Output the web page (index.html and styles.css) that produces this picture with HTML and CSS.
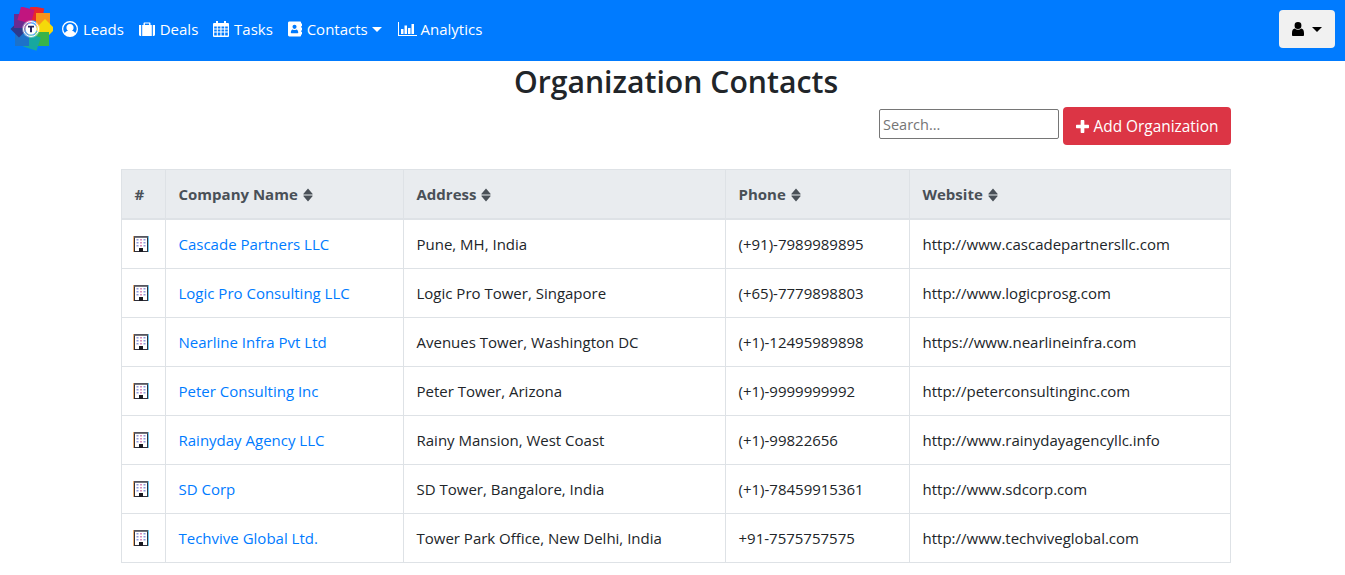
FILE: index.html
```html
<!DOCTYPE html>
<html lang="en">
<head>
<meta charset="utf-8">
<title>Organization Contacts</title>
<link rel="stylesheet" href="styles.css">
</head>
<body>
<svg class="defs" width="0" height="0" aria-hidden="true">
  <symbol id="i-building" viewBox="0 0 16 16">
    <rect x="0" y="0" width="1" height="16" fill="#f0b070"/>
    <rect x="15" y="0" width="1" height="16" fill="#70c8f0"/>
    <rect x="1.500" y="0.500" width="13" height="15" fill="#fff" stroke="#2f2f3a"/>
    <rect x="1" y="0" width="14" height="1.800" fill="#55555f"/>
    <g fill="#8f9ade">
      <rect x="3.500" y="3" width="2" height="1.500"/><rect x="10.500" y="3" width="2" height="1.500"/>
      <rect x="3.500" y="6" width="2" height="1.500"/><rect x="10.500" y="6" width="2" height="1.500"/>
      <rect x="3.500" y="9" width="2" height="1.500"/><rect x="10.500" y="9" width="2" height="1.500"/>
    </g>
    <g fill="#dc8fbc">
      <rect x="7" y="3" width="2" height="1.500"/><rect x="7" y="6" width="2" height="1.500"/><rect x="7" y="9" width="2" height="1.500"/>
    </g>
    <rect x="6" y="12" width="4" height="4" fill="#1a1a22"/>
  </symbol>
  <symbol id="i-sort" viewBox="0 0 10 14">
    <path d="M5 0.500 9.500 5.800a.4.4 0 0 1-.3.7H.8a.4.4 0 0 1-.3-.7zM.8 7.500h8.400a.4.4 0 0 1 .3.7L5 13.500.5 8.200a.4.4 0 0 1 .3-.7z" fill="currentColor"/>
  </symbol>
</svg>
<nav class="navbar">
  <svg class="logo" viewBox="0 0 44 44" aria-label="Logo">
    <g transform="translate(22 22)">
      <rect x="-2" y="-22" width="14" height="14" fill="#e8262c" transform="rotate(12 5 -15)"/>
      <rect x="5" y="-16" width="14" height="14" fill="#f7941d"/>
      <rect x="7" y="-7" width="14" height="14" fill="#f5d90a" transform="rotate(45 14 0)"/>
      <rect x="4" y="3" width="14" height="14" fill="#37b34a"/>
      <rect x="-6" y="6" width="14" height="14" fill="#17a8a0" transform="rotate(18 1 13)"/>
      <rect x="-16" y="3" width="14" height="14" fill="#1d72c9"/>
      <rect x="-18" y="-6" width="12" height="12" fill="#2d3a8c" transform="rotate(45 -12 0)"/>
      <rect x="-17" y="-15" width="14" height="14" fill="#6a2c91"/>
      <rect x="-12" y="-21" width="14" height="14" fill="#c1157f" transform="rotate(15 -5 -14)"/>
      <circle r="9" fill="#fff" fill-opacity=".35"/>
      <circle r="7.500" fill="none" stroke="#fff" stroke-width="1"/>
      <circle r="5.500" fill="#fff"/>
      <path d="M-3-3.200H3V-1.600H1V3.200H-1V-1.600H-3z" fill="#25255e"/>
    </g>
  </svg>
  <ul class="nav-list">
    <li><a class="nav-link" href="#">
      <svg class="nav-icon" viewBox="0 0 16 16"><path fill="currentColor" fill-rule="evenodd" d="M8 0a8 8 0 1 1 0 16A8 8 0 0 1 8 0zm0 1.400a6.600 6.600 0 0 0-5.200 10.700C3.500 10.700 4.600 10 6 9.700a3.600 3.600 0 1 1 4 0c1.400.3 2.500 1 3.200 2.400A6.600 6.600 0 0 0 8 1.400z"/></svg>Leads</a></li>
    <li><a class="nav-link" href="#">
      <svg class="nav-icon" viewBox="0 0 16 16"><path fill="currentColor" d="M5.500 1.500h5c.6 0 1 .4 1 1V4H16v9.500c0 .8-.6 1.500-1.500 1.500h-.7V4h-1v11H3.200V4h-1v11h-.7C.6 15 0 14.300 0 13.500V4h4.500V2.500c0-.6.4-1 1-1zm.4 1V4h4.200V2.500z"/></svg>Deals</a></li>
    <li><a class="nav-link" href="#">
      <svg class="nav-icon" viewBox="0 0 16 16"><path fill="currentColor" fill-rule="evenodd" d="M3 0h2v2h6V0h2v2h2a1 1 0 0 1 1 1v12a1 1 0 0 1-1 1H1a1 1 0 0 1-1-1V3a1 1 0 0 1 1-1h2zM1.200 5.500v2h2.600v-2zm3.600 0v2h2.600v-2zm3.700 0v2h2.700v-2zm3.700 0v2h2.600v-2zM1.200 8.500v2h2.600v-2zm3.600 0v2h2.600v-2zm3.700 0v2h2.700v-2zm3.700 0v2h2.600v-2zM1.200 11.500v3h2.600v-3zm3.600 0v3h2.600v-3zm3.700 0v3h2.700v-3zm3.700 0v3h2.600v-3z"/></svg>Tasks</a></li>
    <li><a class="nav-link" href="#">
      <svg class="nav-icon nav-icon-book" viewBox="0 0 15 16"><path fill="currentColor" fill-rule="evenodd" d="M1.500 0h11.500c.6 0 1 .4 1 1v1h1v3h-1v1.500h1v3h-1V11h1v3h-1v1c0 .6-.4 1-1 1H1.500C.7 16 0 15.300 0 14.500v-13C0 .7.700 0 1.500 0zM7 3.500a2.200 2.200 0 1 0 0 4.400 2.200 2.200 0 0 0 0-4.400zM3 11.800c0 .5.300.7.700.7h6.600c.4 0 .7-.2.700-.7 0-1.800-.9-3.300-2-3.300-.6.400-1.200.6-2 .6s-1.400-.2-2-.6c-1.100 0-2 1.500-2 3.300z"/></svg>Contacts<span class="caret"></span></a></li>
    <li><a class="nav-link" href="#">
      <svg class="nav-icon nav-icon-wide" viewBox="0 0 19 16"><path fill="currentColor" d="M0 1h1v13h18v1H0zM3 8h2.500v5H3zM6.500 4.500H9V13H6.500zM10 7h2.500v6H10zM13.500 3H16v10h-2.500z"/></svg>Analytics</a></li>
  </ul>
  <button class="user-btn" type="button" aria-label="User menu">
    <svg class="user-icon" viewBox="0 0 12 14"><path fill="currentColor" d="M6 0a3.400 3.400 0 0 1 3.400 3.500A3.400 3.400 0 0 1 6 7 3.400 3.400 0 0 1 2.600 3.500 3.400 3.400 0 0 1 6 0zM2.800 6.600C3.700 7.400 4.800 7.800 6 7.800s2.300-.4 3.200-1.200c1.800.1 2.800 1.900 2.800 4.700V13c0 .6-.5 1-1.100 1H1.100C.5 14 0 13.600 0 13v-1.700c0-2.800 1-4.600 2.800-4.700z"/></svg>
    <span class="caret caret-user"></span>
  </button>
</nav>
<main class="container">
  <h1 class="title">Organization Contacts</h1>
  <div class="toolbar">
    <input class="search" type="text" placeholder="Search...">
    <button class="add-btn" type="button">
      <svg class="plus" viewBox="0 0 12 12"><path fill="currentColor" d="M4.300.8C4.300.4 4.700 0 5.100 0h1.800c.4 0 .8.400.8.800v3.500h3.500c.4 0 .8.400.8.800v1.800c0 .4-.4.800-.8.800H7.700v3.500c0 .4-.4.800-.8.800H5.100c-.4 0-.8-.4-.8-.8V7.700H.8C.4 7.700 0 7.300 0 6.900V5.100c0-.4.400-.8.800-.8h3.500z"/></svg>Add Organization</button>
  </div>
  <table class="contacts">
    <thead>
      <tr>
        <th class="col-num">#</th>
        <th class="col-name">Company Name<svg class="sort"><use href="#i-sort"/></svg></th>
        <th class="col-addr">Address<svg class="sort"><use href="#i-sort"/></svg></th>
        <th class="col-phone">Phone<svg class="sort"><use href="#i-sort"/></svg></th>
        <th>Website<svg class="sort"><use href="#i-sort"/></svg></th>
      </tr>
    </thead>
    <tbody>
      <tr><td><svg class="bld"><use href="#i-building"/></svg></td><td><a href="#">Cascade Partners LLC</a></td><td>Pune, MH, India</td><td>(+91)-7989989895</td><td>http://www.cascadepartnersllc.com</td></tr>
      <tr><td><svg class="bld"><use href="#i-building"/></svg></td><td><a href="#">Logic Pro Consulting LLC</a></td><td>Logic Pro Tower, Singapore</td><td>(+65)-7779898803</td><td>http://www.logicprosg.com</td></tr>
      <tr><td><svg class="bld"><use href="#i-building"/></svg></td><td><a href="#">Nearline Infra Pvt Ltd</a></td><td>Avenues Tower, Washington DC</td><td>(+1)-12495989898</td><td>https://www.nearlineinfra.com</td></tr>
      <tr><td><svg class="bld"><use href="#i-building"/></svg></td><td><a href="#">Peter Consulting Inc</a></td><td>Peter Tower, Arizona</td><td>(+1)-9999999992</td><td>http://peterconsultinginc.com</td></tr>
      <tr><td><svg class="bld"><use href="#i-building"/></svg></td><td><a href="#">Rainyday Agency LLC</a></td><td>Rainy Mansion, West Coast</td><td>(+1)-99822656</td><td>http://www.rainydayagencyllc.info</td></tr>
      <tr><td><svg class="bld"><use href="#i-building"/></svg></td><td><a href="#">SD Corp</a></td><td>SD Tower, Bangalore, India</td><td>(+1)-78459915361</td><td>http://www.sdcorp.com</td></tr>
      <tr><td><svg class="bld"><use href="#i-building"/></svg></td><td><a href="#">Techvive Global Ltd.</a></td><td>Tower Park Office, New Delhi, India</td><td>+91-7575757575</td><td>http://www.techviveglobal.com</td></tr>
    </tbody>
  </table>
</main>
</body>
</html>
```
FILE: styles.css
```css
* { box-sizing: border-box; }
html, body { margin: 0; height: 575px; overflow: hidden; }
body {
  font-family: "Open Sans", "Noto Sans", sans-serif;
  font-size: 15px;
  color: #212529;
  background: #fff;
}
.defs { position: absolute; }
.navbar {
  height: 61px;
  background: #007bff;
  display: flex;
  align-items: center;
  padding: 0 10px 3px 9px;
}
.logo { width: 44px; height: 44px; flex: none; }
.nav-list {
  display: flex;
  list-style: none;
  margin: 0;
  padding: 0 0 0 9px;
  flex: 1;
}
.nav-link {
  display: flex;
  align-items: center;
  color: #fff;
  text-decoration: none;
  margin-right: 14.800px;
}
.nav-icon { width: 16px; height: 16px; margin-right: 5px; }
.nav-icon-book { width: 14px; }
.nav-icon-wide { width: 19px; margin-right: 4px; }
.caret {
  display: inline-block;
  margin: 0 1px 0 4px;
  border-top: 5px solid;
  border-left: 5px solid transparent;
  border-right: 5px solid transparent;
}
.user-btn {
  width: 56px;
  height: 38px;
  background: #f1f1f1;
  border: 0;
  border-radius: 4px;
  color: #000;
  display: flex;
  align-items: center;
  justify-content: center;
  padding: 0;
}
.user-icon { width: 12px; height: 14px; }
.caret-user { margin: 0 0 0 8px; }
.container { width: 1110px; margin: 0 0 0 121px; }
.title {
  margin: 0;
  height: 46px;
  text-align: center;
  font-size: 30.200px;
  line-height: 42px;
  font-weight: 600;
}
.toolbar {
  display: flex;
  justify-content: flex-end;
  align-items: flex-start;
  gap: 4px;
  height: 38px;
}
.search {
  width: 180px;
  height: 30px;
  margin-top: 2px;
  border: 1px solid #767676;
  border-radius: 2px;
  padding: 1px 3px;
  font: inherit;
  font-size: 14.500px;
  color: #212529;
}
.search::placeholder { color: #757575; }
.add-btn {
  height: 38px;
  width: 168px;
  background: #dc3545;
  border: 0;
  border-radius: 4px;
  color: #fff;
  font: inherit;
  font-size: 15.400px;
  display: flex;
  align-items: center;
  justify-content: center;
  padding: 0;
}
.plus { width: 13px; height: 13px; margin-right: 5px; }
.contacts {
  width: 1110px;
  margin-top: 24px;
  border-collapse: collapse;
  table-layout: fixed;
}
.contacts th, .contacts td {
  border: 1px solid #dee2e6;
  padding: 0 12.500px;
  text-align: left;
  white-space: nowrap;
}
.contacts th {
  height: 49px;
  background: #e9ecef;
  color: #495057;
  font-weight: 700;
  border-bottom-width: 2px;
}
.contacts td { height: 49px; }
.contacts tbody tr:first-child td { height: 50px; }
.contacts a { color: #007bff; text-decoration: none; }
.col-num { width: 44px; }
.col-name { width: 238px; }
.col-addr { width: 322px; }
.col-phone { width: 184px; }
.sort { width: 10px; height: 14px; margin-left: 5px; vertical-align: -2px; }
.bld { width: 16px; height: 16px; margin-left: -2px; display: block; }
```
